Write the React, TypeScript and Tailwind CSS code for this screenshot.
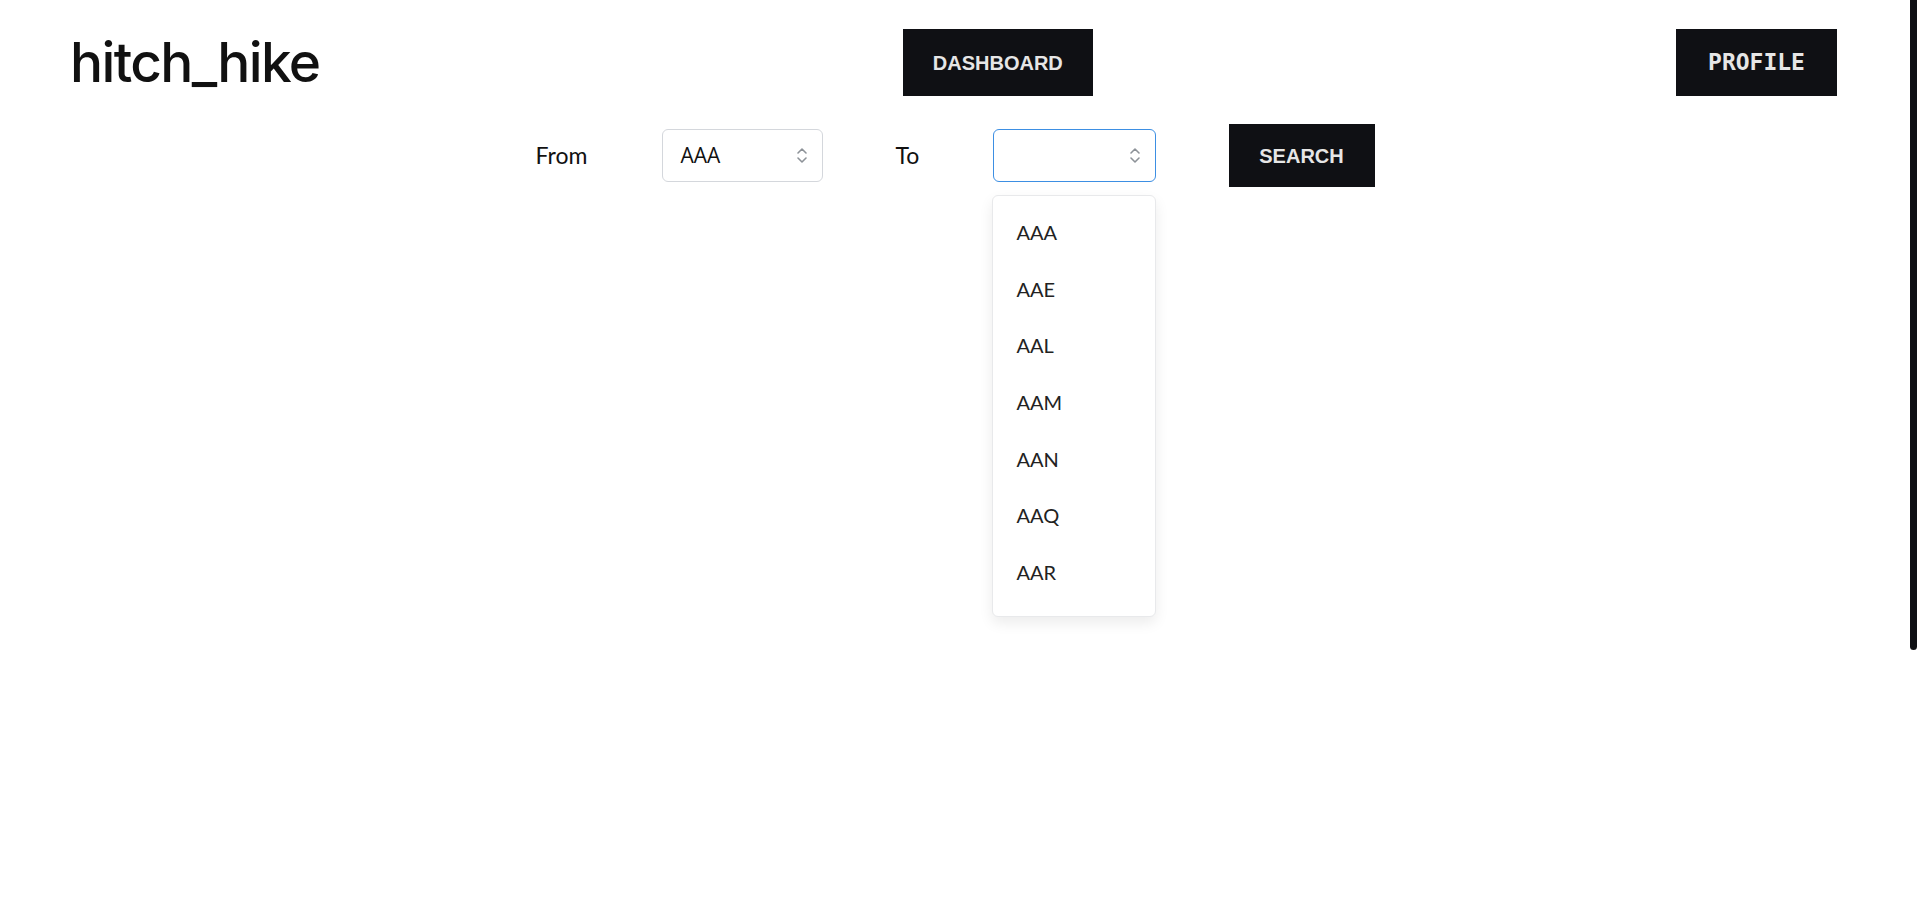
import React, { useState } from 'react';

const airports = ['AAA', 'AAE', 'AAL', 'AAM', 'AAN', 'AAQ', 'AAR'];

const UpDownIcon: React.FC = () => (
  <svg width="12" height="17" viewBox="0 0 12 17" fill="none" className="text-[#8d9298]">
    <path d="M2 6 L6 2 L10 6" stroke="currentColor" strokeWidth="1.6" strokeLinecap="round" strokeLinejoin="round" />
    <path d="M2 11 L6 15 L10 11" stroke="currentColor" strokeWidth="1.6" strokeLinecap="round" strokeLinejoin="round" />
  </svg>
);

interface SelectBoxProps {
  value: string;
  focused?: boolean;
  widthClass: string;
  onClick?: () => void;
}

const SelectBox: React.FC<SelectBoxProps> = ({ value, focused, widthClass, onClick }) => (
  <button
    onClick={onClick}
    className={`flex items-center justify-between h-[53px] ${widthClass} pl-[18px] pr-[14px] rounded-[6px] border bg-white text-left ${
      focused ? 'border-[#3d8fe3]' : 'border-[#d4d7dc]'
    }`}
  >
    <span className="font-['Open_Sans',sans-serif] text-[21px] text-[#111] leading-none">{value}</span>
    <UpDownIcon />
  </button>
);

export default function App() {
  const [from, setFrom] = useState('AAA');
  const [to, setTo] = useState('');
  const [open, setOpen] = useState(true);

  return (
    <div className="flex h-screen overflow-hidden bg-white">
      <main className="flex-1">
        {/* Header */}
        <header className="flex items-center justify-between pl-[70px] pr-[73px] pt-[29px] pb-[28px]">
          <h1 className="font-['Inter',sans-serif] font-medium text-[55px] leading-none tracking-[-0.03em] text-[#111]">
            hitch_hike
          </h1>
          <button className="w-[190px] h-[67px] bg-[#0f1014] text-[#e6e6e6] font-['Liberation_Sans',sans-serif] font-bold text-[20px]">
            DASHBOARD
          </button>
          <button className="w-[161px] h-[67px] bg-[#0f1014] text-[#e6e6e6] font-['DejaVu_Sans_Mono',monospace] font-bold text-[23px]">
            PROFILE
          </button>
        </header>

        {/* Search row */}
        <div className="flex items-center justify-center gap-[73px]">
          <span className="w-[53px] font-['Lato',sans-serif] text-[23px] text-[#111]">From</span>
          <SelectBox value={from} widthClass="w-[161px]" onClick={() => setFrom(from)} />
          <span className="w-[24px] font-['Lato',sans-serif] text-[23px] text-[#111]">To</span>
          <div className="relative">
            <SelectBox value={to} focused widthClass="w-[163px]" onClick={() => setOpen(!open)} />
            {open && (
              <ul className="absolute left-[-1px] top-[calc(100%+13px)] w-[164px] pt-[8px] pb-[16px] bg-white rounded-[6px] border border-[#e8e9eb] shadow-[0_6px_14px_rgba(0,0,0,0.08)] z-10">
                {airports.map((code) => (
                  <li
                    key={code}
                    onClick={() => {
                      setTo(code);
                      setOpen(false);
                    }}
                    className="h-[56.6px] flex items-center pl-[24px] font-['Lato',sans-serif] text-[20px] text-[#222] cursor-pointer"
                  >
                    {code}
                  </li>
                ))}
              </ul>
            )}
          </div>
          <button className="w-[146px] h-[63px] bg-[#0f1014] text-[#e6e6e6] font-['Liberation_Sans',sans-serif] font-bold text-[20px]">
            SEARCH
          </button>
        </div>
      </main>

      {/* scrollbar */}
      <aside className="w-[7px] shrink-0">
        <div className="h-[650px] bg-[#0f1014] rounded-b-[4px]" />
      </aside>
    </div>
  );
}
